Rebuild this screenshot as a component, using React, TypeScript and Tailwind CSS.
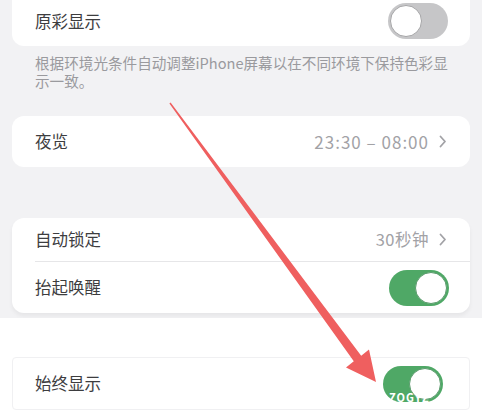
import React from "react";

function Toggle({ on }: { on: boolean }) {
  if (on) {
    return (
      <div className="flex h-[36px] w-[60px] items-center justify-end rounded-full bg-[#4fa866] p-[2px]">
        <div className="h-[32px] w-[32px] rounded-full border-[1.5px] border-[#5a9b6c] bg-white" />
      </div>
    );
  }
  return (
    <div className="flex h-[36px] w-[60px] items-center rounded-full bg-[#c6c6c8] p-[2px]">
      <div className="h-[32px] w-[32px] rounded-full border-[1.5px] border-[#a5a5a7] bg-white" />
    </div>
  );
}

function Chevron() {
  return (
    <svg width="8" height="13" viewBox="0 0 8 13" className="ml-[10px]">
      <path d="M1.5 1.5 L6 6.5 L1.5 11.5" fill="none" stroke="#a2a2a6" strokeWidth="1.8" strokeLinecap="round" strokeLinejoin="round" />
    </svg>
  );
}

export default function App() {
  return (
    <div
      className="relative h-[414px] w-[482px] overflow-hidden bg-[#f2f2f4] text-[#3d3d3f]"
      style={{ fontFamily: '"Noto Sans CJK SC", "Noto Sans", sans-serif' }}
    >
      <div className="flex flex-col">
        <div className="mx-[12px] mt-[-4px] flex h-[50px] items-center justify-between rounded-b-[12px] bg-white pl-[23px] pr-[22px]">
          <span className="text-[16.5px]">原彩显示</span>
          <Toggle on={false} />
        </div>
        <p className="ml-[35px] mt-[8px] w-[418px] text-[14.6px] leading-[18px] text-[#9a9a9e]">
          根据环境光条件自动调整iPhone屏幕以在不同环境下保持色彩显示一致。
        </p>
        <div className="mx-[12px] mt-[26px] flex h-[51px] items-center justify-between rounded-[12px] bg-white pl-[23px] pr-[23px]">
          <span className="text-[16.5px]">夜览</span>
          <div className="flex items-center text-[#a2a2a6]">
            <span className="text-[17px] tracking-[1px]">23:30 – 08:00</span>
            <Chevron />
          </div>
        </div>
        <div className="mx-[12px] mt-[51px] flex flex-col rounded-[12px] bg-white shadow-[0_3px_4px_rgba(0,0,0,0.05)]">
          <div className="flex h-[43px] items-center justify-between pl-[23px] pr-[23px]">
            <span className="text-[16.5px]">自动锁定</span>
            <div className="flex items-center text-[#a2a2a6]">
              <span className="text-[16.5px] tracking-[0.5px]">30秒钟</span>
              <Chevron />
            </div>
          </div>
          <div className="ml-[23px] h-px bg-[#e6e6e8]" />
          <div className="flex h-[51px] items-center justify-between pl-[23px] pr-[21px]">
            <span className="text-[16.5px]">抬起唤醒</span>
            <Toggle on />
          </div>
        </div>
        <div className="mt-[5px] flex h-[200px] flex-col bg-white pt-[39px]">
          <div className="mx-[12px] flex h-[53px] items-center justify-between rounded-[4px] border border-[#f0f0f2] bg-white pl-[22px] pr-[26px]">
            <span className="text-[16.5px]">始终显示</span>
            <Toggle on />
          </div>
        </div>
      </div>
      <svg className="pointer-events-none absolute left-0 top-0" width="482" height="414" viewBox="0 0 482 414">
        <polygon
          points="170.6,102.5 361.2,355.7 369,349.5 376,382 346,367.5 353.8,361.3 169.4,103.5"
          fill="#ef5f5f"
        />
      </svg>
      <span className="absolute left-[389px] top-[389px] text-[11px] font-bold tracking-[1px] text-white">ZOGYZ</span>
    </div>
  );
}
